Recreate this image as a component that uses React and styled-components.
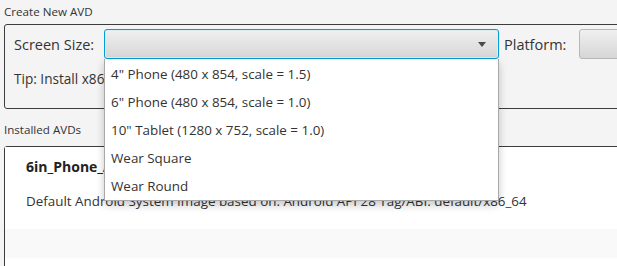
import React from "react";
import styled, { createGlobalStyle } from "styled-components";

const Global = createGlobalStyle`
  html, body { margin: 0; padding: 0; background: #f4f4f4; overflow: hidden; }
  body { font-family: "Open Sans", "Noto Sans", sans-serif; color: #333; }
  #root { width: 617px; height: 266px; position: relative; overflow: hidden; }
`;

const Page = styled.div`
  position: relative;
  width: 617px;
  height: 266px;
  padding-left: 4px;
  box-sizing: border-box;
`;

const SectionLabel = styled.div`
  font-size: 11.6px;
  line-height: 14px;
  height: 14px;
  padding-top: ${(p) => p.$top}px;
  color: #333;
  white-space: nowrap;
`;

const TitledBox = styled.div`
  margin-top: ${(p) => p.$gap}px;
  width: 640px;
  height: ${(p) => p.$h}px;
  border: 1px solid #3c3c3c;
  border-radius: 3px;
  box-sizing: border-box;
  padding: 4px 0 0 9px;
  display: flex;
  flex-direction: column;
  gap: 8px;
`;

const Row = styled.div`
  display: flex;
  align-items: center;
  height: ${(p) => p.$h}px;
`;

const FieldLabel = styled.div`
  font-size: 14.5px;
  color: #333;
  width: ${(p) => p.$w}px;
  padding-left: ${(p) => p.$pl || 0}px;
  white-space: nowrap;
  flex-shrink: 0;
`;

const Combo = styled.div`
  width: ${(p) => p.$w}px;
  height: 30px;
  box-sizing: border-box;
  border-radius: 3px;
  border: 1px solid ${(p) => (p.$focused ? "#039ed3" : "#b8b8b8")};
  box-shadow: ${(p) => (p.$focused ? "inset 0 0 0 1px #dcedf3" : "none")};
  background: linear-gradient(#f0f0f0, #d6d6d6);
  display: flex;
  align-items: center;
  justify-content: flex-end;
  padding-right: 12px;
  flex-shrink: 0;
`;

const Arrow = styled.div`
  width: 0;
  height: 0;
  border-left: 4.5px solid transparent;
  border-right: 4.5px solid transparent;
  border-top: 5px solid #4a4a4a;
`;

const TipText = styled.div`
  font-size: 13.6px;
  color: #333;
  white-space: nowrap;
`;

const ListBox = styled.div`
  margin-top: 9px;
  width: 640px;
  height: 140px;
  border: 1px solid #3c3c3c;
  border-radius: 3px;
  box-sizing: border-box;
  background: #fff;
  display: flex;
  flex-direction: column;
`;

const AvdRow = styled.div`
  height: ${(p) => p.$h}px;
  background: ${(p) => (p.$alt ? "#f9f9f9" : "#fff")};
  padding-left: 21px;
  box-sizing: border-box;
  display: flex;
  flex-direction: column;
  flex-shrink: 0;
`;

const AvdName = styled.div`
  margin-top: 10px;
  font-weight: 700;
  font-size: 14px;
  color: #222;
  line-height: 20px;
`;

const AvdDesc = styled.div`
  margin-top: 14px;
  font-size: 13.4px;
  color: #333;
  line-height: 20px;
  white-space: nowrap;
`;

const Popup = styled.ul`
  position: absolute;
  left: 104px;
  top: 59px;
  width: 395px;
  margin: 0;
  padding: 1px 0 0;
  list-style: none;
  background: #fff;
  border: 1px solid #a8a8a8;
  border-top: none;
  box-sizing: border-box;
  box-shadow: 0 4px 8px rgba(0, 0, 0, 0.22);
`;

const Item = styled.li`
  height: 28px;
  line-height: 28px;
  padding-left: 6px;
  font-size: 13.4px;
  color: #333;
  white-space: nowrap;
`;

const items = [
  '4" Phone (480 x 854, scale = 1.5)',
  '6" Phone (480 x 854, scale = 1.0)',
  '10" Tablet (1280 x 752, scale = 1.0)',
  "Wear Square",
  "Wear Round",
];

export default function App() {
  return (
    <Page>
      <Global />
      <SectionLabel $top={5}>Create New AVD</SectionLabel>
      <TitledBox $gap={5} $h={85}>
        <Row $h={30}>
          <FieldLabel $w={90}>Screen Size:</FieldLabel>
          <Combo $w={395} $focused>
            <Arrow />
          </Combo>
          <FieldLabel $w={75} $pl={5}>Platform:</FieldLabel>
          <Combo $w={80} />
        </Row>
        <Row $h={22}>
          <TipText>Tip: Install x86 images for best performance</TipText>
        </Row>
      </TitledBox>
      <SectionLabel $top={14}>Installed AVDs</SectionLabel>
      <ListBox>
        <AvdRow $h={82}>
          <AvdName>6in_Phone_API_28</AvdName>
          <AvdDesc>
            Default Android System Image based on: Android API 28 Tag/ABI: default/x86_64
          </AvdDesc>
        </AvdRow>
        <AvdRow $h={29} $alt />
        <AvdRow $h={29} />
      </ListBox>
      <Popup>
        {items.map((t) => (
          <Item key={t}>{t}</Item>
        ))}
      </Popup>
    </Page>
  );
}
